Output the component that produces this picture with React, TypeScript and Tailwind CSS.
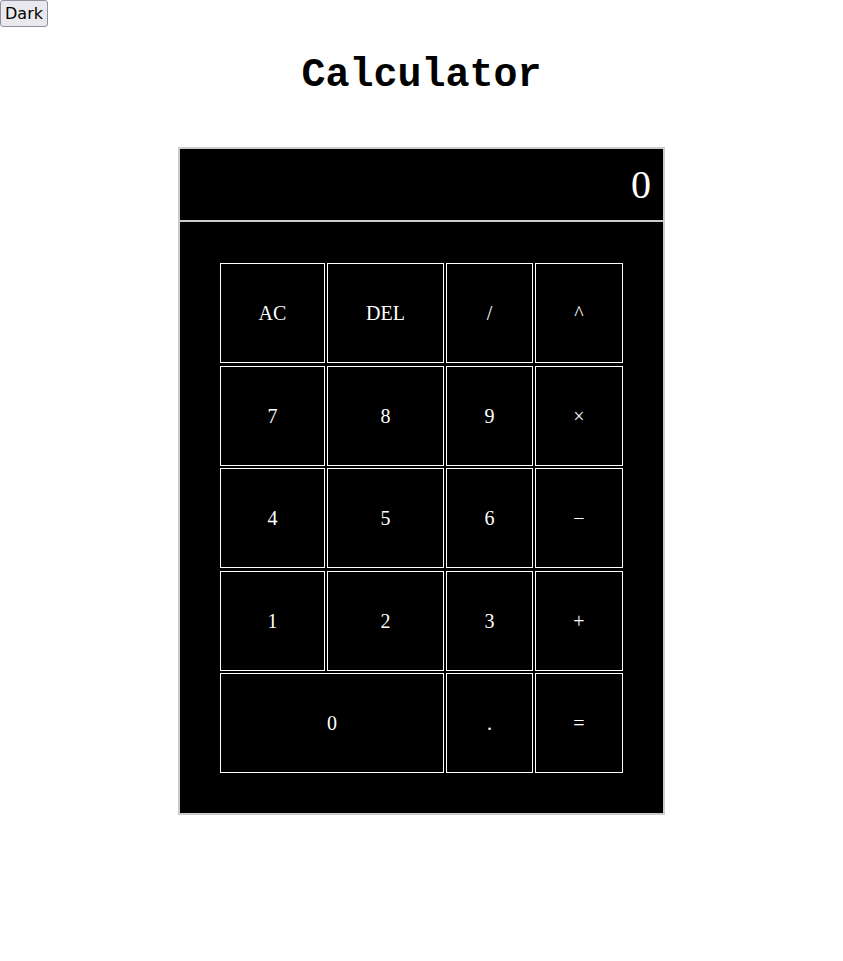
import { useState } from 'react';

const keys: { label: string; span?: boolean }[] = [
  { label: 'AC' },
  { label: 'DEL' },
  { label: '/' },
  { label: '^' },
  { label: '7' },
  { label: '8' },
  { label: '9' },
  { label: '×' },
  { label: '4' },
  { label: '5' },
  { label: '6' },
  { label: '−' },
  { label: '1' },
  { label: '2' },
  { label: '3' },
  { label: '+' },
  { label: '0', span: true },
  { label: '.' },
  { label: '=' },
];

export default function App() {
  const [display] = useState('0');

  return (
    <div className="min-h-[961px] bg-white">
      <button
        type="button"
        className="flex h-[27px] w-[48px] items-center justify-center rounded-[3px] border border-[#8f8f9d] bg-[#e9e9ed] font-['DejaVu_Sans',sans-serif] text-[16px] text-black"
      >
        Dark
      </button>

      <h1 className="mt-[26px] text-center font-['Liberation_Mono',monospace] text-[40px] font-bold leading-[45px] text-black">
        Calculator
      </h1>

      <div className="mx-auto mt-[49px] w-[487px] border-2 border-[#cccccc] bg-black">
        {/* display */}
        <div className="flex h-[73px] items-center justify-end border-b-2 border-[#cccccc] pr-[12px] font-['Liberation_Serif',serif] text-[40px] leading-none text-white">
          {display}
        </div>

        {/* keypad */}
        <div className="px-[40px] pb-[40px] pt-[41px]">
          <div className="grid grid-cols-[105px_117px_87px_88px] gap-x-[2px] gap-y-[2.5px]">
            {keys.map((k) => (
              <button
                key={k.label}
                type="button"
                className={`flex h-[100px] items-center justify-center border border-white bg-black font-['Liberation_Serif',serif] text-[20px] text-white ${
                  k.span ? 'col-span-2' : ''
                }`}
              >
                {k.label}
              </button>
            ))}
          </div>
        </div>
      </div>
    </div>
  );
}
